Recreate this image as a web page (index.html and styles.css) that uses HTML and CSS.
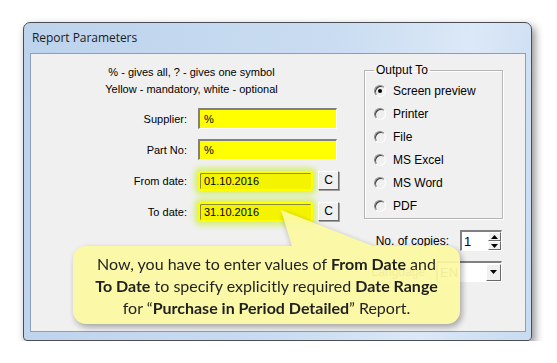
FILE: index.html
```html
<!DOCTYPE html>
<html lang="en">
<head>
    <meta charset="UTF-8">
    <title>Report Parameters</title>
    <link rel="stylesheet" href="styles.css">
</head>
<body>
    <div class="window">
        <div class="titlebar">Report Parameters</div>
        <div class="client">
            <div class="params">
                <p class="hint">% - gives all, ? - gives one symbol<br>Yellow - mandatory, white - optional</p>
                <div class="row">
                    <label>Supplier:</label>
                    <div class="field mandatory">%</div>
                </div>
                <div class="row">
                    <label>Part No:</label>
                    <div class="field mandatory">%</div>
                </div>
                <div class="row">
                    <label>From date:</label>
                    <div class="field date">01.10.2016</div>
                    <div class="btn-c">C</div>
                </div>
                <div class="row">
                    <label>To date:</label>
                    <div class="field date">31.10.2016</div>
                    <div class="btn-c">C</div>
                </div>
            </div>
            <div class="side">
                <fieldset class="group">
                    <legend>Output To</legend>
                    <div class="option"><span class="radio checked"></span>Screen preview</div>
                    <div class="option"><span class="radio"></span>Printer</div>
                    <div class="option"><span class="radio"></span>File</div>
                    <div class="option"><span class="radio"></span>MS Excel</div>
                    <div class="option"><span class="radio"></span>MS Word</div>
                    <div class="option"><span class="radio"></span>PDF</div>
                </fieldset>
                <div class="side-row">
                    <label>No. of copies:</label>
                    <div class="spin">
                        <span>1</span>
                        <div class="spin-btns">
                            <div class="spin-btn"><svg width="7" height="4" viewBox="0 0 7 4"><path d="M3.5 0L7 4H0z" fill="#000"/></svg></div>
                            <div class="spin-btn"><svg width="7" height="4" viewBox="0 0 7 4"><path d="M0 0H7L3.5 4z" fill="#000"/></svg></div>
                        </div>
                    </div>
                </div>
                <div class="side-row">
                    <label class="faint">Language</label>
                    <div class="combo">
                        <span class="faint">EN</span>
                        <div class="combo-btn"><svg width="7" height="4" viewBox="0 0 7 4"><path d="M0 0H7L3.5 4z" fill="#000"/></svg></div>
                    </div>
                </div>
            </div>
        </div>

        <!-- hint bubble pointing at the "To date" field -->
        <div class="callout">
            <svg class="callout-tail" width="120" height="42" viewBox="0 0 120 42">
                <path d="M8 0L20 40H110z" fill="#fcf9a2"/>
            </svg>
            <div class="callout-body">
                Now, you have to enter values of <b>From Date</b> and<br>
                <b>To Date</b> to specify explicitly required <b>Date Range</b><br>
                for &ldquo;<b>Purchase in Period Detailed</b>&rdquo; Report.
            </div>
        </div>
    </div>
</body>
</html>
```

FILE: styles.css
```css
body {
    margin: 0;
    background-color: #fff;
    font-family: "Liberation Sans", Arial, sans-serif;
    font-size: 11px;
    color: #000;
}
.window {
    position: relative;
    box-sizing: border-box;
    width: 509px;
    height: 319px;
    margin: 22px 0 0 23px;
    padding: 0 5px 8px 6px;
    border: 1px solid #4b4f55;
    border-radius: 7px 7px 4px 4px;
    background: linear-gradient(100deg, #bdd3ec 0%, #c9dcf1 55%, #dbe8f7 80%, #c8dbf0 100%);
    box-shadow: 3px 4px 9px rgba(0, 0, 0, 0.45);
}
.titlebar {
    height: 30px;
    line-height: 30px;
    padding-left: 2px;
    font-family: "Open Sans", sans-serif;
    font-size: 12px;
    color: #1b1b1b;
    letter-spacing: -0.05px;
}
.client {
    display: flex;
    height: 277px;
    border: 1px solid #8c9fb5;
    background-color: #f0f0f0;
}
.params {
    width: 321px;
}
.hint {
    margin: 0;
    padding-top: 10px;
    line-height: 17px;
    text-align: center;
}
.row {
    display: flex;
    align-items: center;
    height: 21px;
    margin-top: 10px;
}
.row label {
    width: 156px;
    margin-right: 11px;
    text-align: right;
}
.field {
    box-sizing: border-box;
    height: 21px;
    line-height: 18px;
    padding-left: 4px;
}
.mandatory {
    width: 139px;
    background-color: #ffff00;
    border-style: solid;
    border-width: 2px 1px 1px 2px;
    border-color: #808080 #fff #fff #808080;
}
.date {
    width: 115px;
    height: 20px;
    line-height: 16px;
    background-color: #f4f400;
    border: 2px solid #ffff00;
    border-radius: 3px;
    box-shadow: inset 1px 1px 0 #8a8a40, 0 0 5px 4px rgba(205, 240, 90, 0.7);
}
.btn-c {
    box-sizing: border-box;
    width: 21px;
    height: 19px;
    margin-left: 5px;
    line-height: 17px;
    text-align: center;
    font-size: 12px;
    border-style: solid;
    border-width: 1px;
    border-color: #fff #696969 #696969 #fff;
    box-shadow: 1px 1px 0 #a0a0a0;
}
.side {
    width: 139px;
    margin-left: 12px;
    padding-top: 9px;
}
.group {
    box-sizing: border-box;
    width: 139px;
    margin: 0;
    padding: 2px 0 1px 9px;
    min-width: 0;
    border: 1px solid #b5b5b5;
    box-shadow: 1px 1px 0 #fff, inset 1px 1px 0 #fff;
}
.group legend {
    padding: 0 2px;
    line-height: 14px;
    font-size: 12px;
}
.option {
    display: flex;
    align-items: center;
    height: 23px;
    font-size: 12px;
}
.radio {
    position: relative;
    box-sizing: border-box;
    width: 12px;
    height: 12px;
    margin-right: 7px;
    border-radius: 50%;
    border: 1px solid;
    border-color: #8a8a8a #fff #fff #8a8a8a;
    box-shadow: inset 1px 1px 0 #404040;
    background-color: #f0f0f0;
}
.radio.checked::after {
    content: "";
    position: absolute;
    left: 3px;
    top: 3px;
    width: 4px;
    height: 4px;
    border-radius: 50%;
    background-color: #000;
}
.side-row {
    display: flex;
    align-items: center;
    justify-content: flex-end;
    padding-right: 1px;
    margin-top: 11px;
}
.side-row label {
    margin-right: 11px;
    font-size: 12px;
}
.faint {
    color: #555;
}
.spin, .combo {
    display: flex;
    align-items: center;
    box-sizing: border-box;
    height: 21px;
    background-color: #fff;
    border-style: solid;
    border-width: 2px 1px 1px 2px;
    border-color: #808080 #fff #fff #808080;
    font-size: 13px;
}
.spin {
    width: 42px;
}
.spin span, .combo span {
    flex: 1;
    padding-left: 2px;
}
.spin-btns {
    display: flex;
    flex-direction: column;
    width: 13px;
    height: 18px;
}
.spin-btn, .combo-btn {
    display: flex;
    align-items: center;
    justify-content: center;
    box-sizing: border-box;
    flex: 1;
    background-color: #f0f0f0;
    border-style: solid;
    border-width: 1px;
    border-color: #fff #696969 #696969 #fff;
}
.combo {
    width: 66px;
    margin-top: -1px;
}
.combo-btn {
    flex: none;
    width: 15px;
    height: 17px;
}
.callout {
    position: absolute;
    left: 49px;
    top: 223px;
    width: 387px;
    height: 78px;
    opacity: 0.93;
    filter: drop-shadow(2px 3px 3px rgba(0, 0, 0, 0.35));
}
.callout-tail {
    position: absolute;
    left: 200px;
    top: -36px;
}
.callout-body {
    position: relative;
    box-sizing: border-box;
    height: 100%;
    padding-top: 7px;
    border-radius: 13px;
    background-color: #fcf9a2;
    font-family: Lato, sans-serif;
    font-size: 16px;
    line-height: 22px;
    text-align: center;
    color: #111;
}
.callout-body b {
    font-weight: bold;
}
```
